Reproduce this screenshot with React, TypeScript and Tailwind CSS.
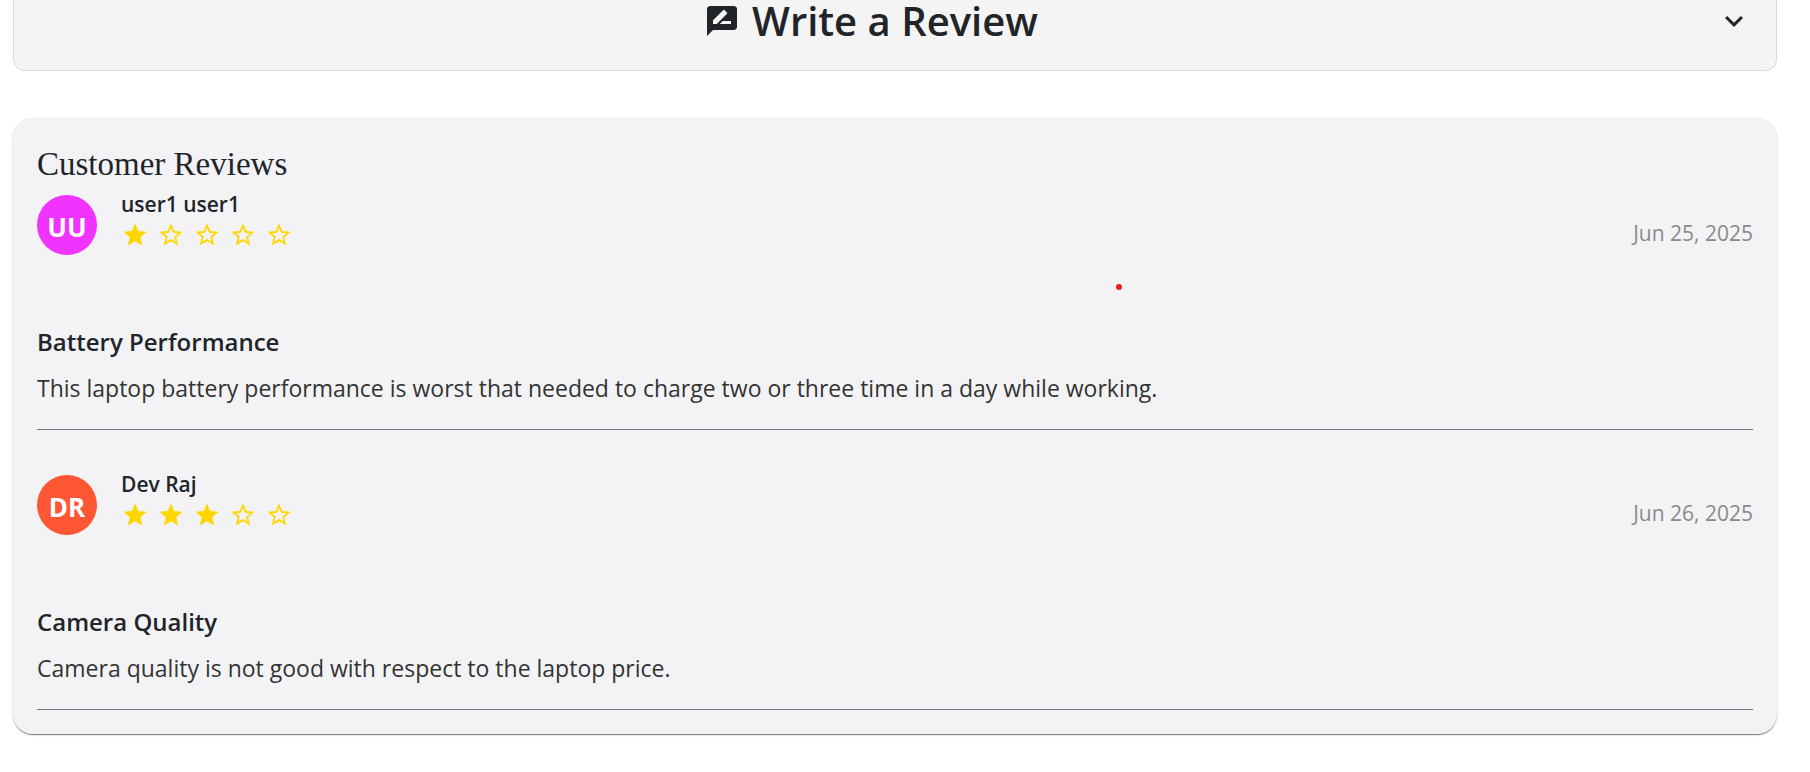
import { MdKeyboardArrowDown, MdRateReview, MdStar, MdStarBorder } from "react-icons/md";

type Review = {
  name: string;
  initials: string;
  avatar: string;
  rating: number;
  date: string;
  dateTime: string;
  title: string;
  body: string;
};

const reviews: Review[] = [
  {
    name: "user1 user1",
    initials: "UU",
    avatar: "bg-[#f033ff]",
    rating: 1,
    date: "Jun 25, 2025",
    dateTime: "2025-06-25",
    title: "Battery Performance",
    body: "This laptop battery performance is worst that needed to charge two or three time in a day while working.",
  },
  {
    name: "Dev Raj",
    initials: "DR",
    avatar: "bg-[#ff5733]",
    rating: 3,
    date: "Jun 26, 2025",
    dateTime: "2025-06-26",
    title: "Camera Quality",
    body: "Camera quality is not good with respect to the laptop price.",
  },
];

function Stars({ rating }: { rating: number }) {
  return (
    <div role="img" aria-label={`${rating} out of 5`} className="flex gap-2 text-[#ffd700]">
      {[1, 2, 3, 4, 5].map((n) =>
        n <= rating ? <MdStar key={n} size={28} /> : <MdStarBorder key={n} size={28} />
      )}
    </div>
  );
}

function ReviewItem({ review }: { review: Review }) {
  return (
    <article className="mb-[45px] border-b border-[#777783] pb-[23px] last:mb-0">
      <div className="flex items-start justify-between">
        <div className="flex items-start gap-6">
          <div
            className={`flex size-[60px] items-center justify-center rounded-full pt-1 text-[26px] font-bold text-white ${review.avatar}`}
          >
            {review.initials}
          </div>
          <div>
            <h3 className="-mt-1 mb-1 text-[21px] leading-[26px] font-semibold">{review.name}</h3>
            <Stars rating={review.rating} />
          </div>
        </div>
        <time dateTime={review.dateTime} className="mt-[22px] text-[21px] leading-8 text-[#8a8a8a]">
          {review.date}
        </time>
      </div>
      <h4 className="mt-[71px] text-2xl leading-8 font-semibold">{review.title}</h4>
      <p className="mt-3 text-[23px] leading-9 text-[#333333]">{review.body}</p>
    </article>
  );
}

export default function App() {
  return (
    <main className="relative min-h-screen bg-white pr-[33px] pl-[13px] font-['Open_Sans','Noto_Sans',sans-serif] text-[#212529]">
      <button
        type="button"
        className="flex w-full items-start rounded-b-xl border border-t-0 border-[#dcdcdc] bg-[#f4f4f4] px-6 pt-[3px] pb-[31px]"
      >
        <span className="flex flex-1 items-center justify-center gap-3 pr-3">
          <MdRateReview size={36} />
          <span className="text-[40px] leading-9 font-semibold">Write a Review</span>
        </span>
        <MdKeyboardArrowDown size={36} />
      </button>

      <section className="mt-[47px] rounded-[20px] bg-[#f3f3f6] p-6 shadow-[0_2px_1px_-1px_rgba(0,0,0,0.3),0_1px_1px_0_rgba(0,0,0,0.2),0_1px_3px_0_rgba(0,0,0,0.12)]">
        <h2 className="mb-[9px] font-['Liberation_Serif',serif] text-[33px] leading-11">Customer Reviews</h2>
        {reviews.map((review) => (
          <ReviewItem key={review.name} review={review} />
        ))}
      </section>

      <span className="absolute top-[284px] left-[1116px] size-[6px] rounded-full bg-[#ee1c1c]" />
    </main>
  );
}
